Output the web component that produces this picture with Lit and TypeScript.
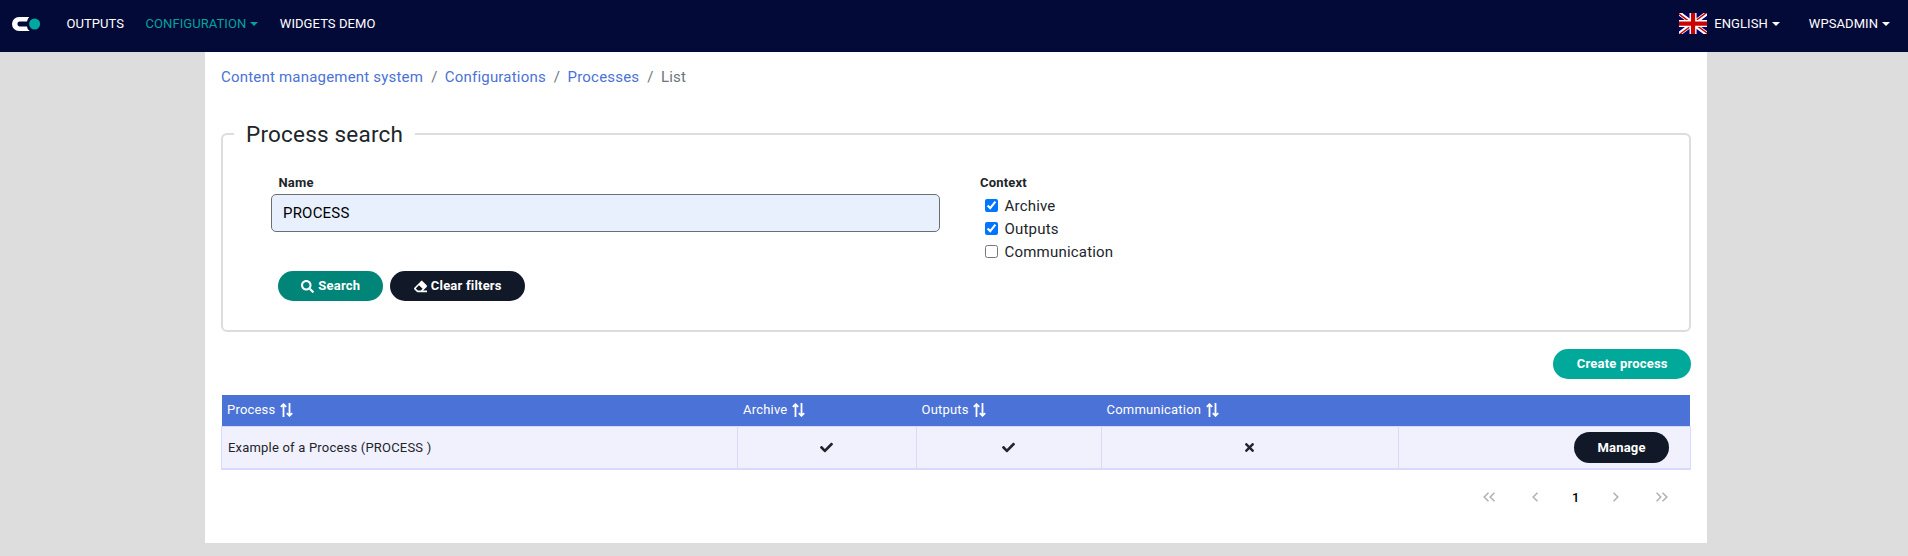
import { LitElement, html, css, svg } from "lit";
import { customElement } from "lit/decorators.js";

const crumbs = ["Content management system", "Configurations", "Processes"];
const contexts = [
  { label: "Archive", on: true },
  { label: "Outputs", on: true },
  { label: "Communication", on: false },
];
const columns = ["Process", "Archive", "Outputs", "Communication"];

const logo = svg`<svg class="logo" width="28" height="14" viewBox="0 0 28 14">
  <path fill="#fff" d="M7 0H17.2Q15 2.6 15 4.6H7.2A2.5 2.5 0 0 0 7.2 9.4H15Q15 11.6 17.6 14H7A7 7 0 0 1 7 0Z"/>
  <circle cx="22.6" cy="7" r="5.5" fill="#00a99d"/></svg>`;
const flag = svg`<svg class="flag" width="28" height="21" viewBox="0 0 640 480" preserveAspectRatio="none">
  <path fill="#006" d="M0 0h640v480H0z"/>
  <path fill="#fff" d="m75 0 244 181L562 0h78v62L400 241l240 178v61h-80L320 301 81 480H0v-60l239-178L0 64V0z"/>
  <path fill="#c00" d="m424 281 216 159v40L369 281zm-184 20 6 35L54 480H0zM640 0v3L391 191l2-44L590 0zM0 0l239 176h-60L0 42z"/>
  <path fill="#fff" d="M241 0v480h160V0zM0 160v160h640V160z"/>
  <path fill="#c00" d="M0 193v96h640v-96zM273 0v480h96V0z"/></svg>`;
const search = svg`<svg width="13" height="13" viewBox="0 0 512 512"><path fill="currentColor" d="M505 442.7 405.300 343c-4.500-4.500-10.600-7-17-7H372c27.600-35.300 44-79.700 44-128C416 93.100 322.900 0 208 0S0 93.100 0 208s93.100 208 208 208c48.300 0 92.700-16.400 128-44v16.300c0 6.400 2.500 12.500 7 17l99.700 99.700c9.400 9.400 24.600 9.400 33.900 0l28.300-28.300c9.400-9.400 9.400-24.600.1-34zM208 336c-70.700 0-128-57.200-128-128 0-70.700 57.200-128 128-128 70.700 0 128 57.200 128 128 0 70.700-57.200 128-128 128z"/></svg>`;
const eraser = svg`<svg width="13" height="13" viewBox="0 0 512 512"><path fill="currentColor" d="M497.900 273.900c18.700-18.700 18.700-49.100 0-67.900l-160-160c-18.700-18.700-49.100-18.700-67.900 0l-256 256c-18.700 18.700-18.700 49.100 0 67.900l96 96A48 48 0 0 0 144 480h356c6.600 0 12-5.400 12-12v-40c0-6.600-5.400-12-12-12H355.900l142-142.100zM195.300 204.700l144 144L272 416H150.600l-80-80 124.700-131.300z"/></svg>`;
const check = svg`<svg width="13" height="13" viewBox="0 0 512 512"><path fill="currentColor" d="M173.900 439.400l-166.400-166.400c-10-10-10-26.200 0-36.200l36.200-36.200c10-10 26.200-10 36.200 0L192 312.700 432.100 72.600c10-10 26.200-10 36.200 0l36.200 36.200c10 10 10 26.200 0 36.200L210.100 439.400c-10 10-26.200 10-36.200 0z"/></svg>`;
const cross = svg`<svg width="9" height="13" viewBox="0 0 352 512"><path fill="currentColor" d="M242.700 256l100.100-100.100c12.300-12.300 12.300-32.200 0-44.500l-22.200-22.200c-12.300-12.300-32.200-12.300-44.500 0L176 189.300 75.900 89.200c-12.300-12.300-32.200-12.300-44.500 0L9.200 111.500c-12.300 12.300-12.300 32.200 0 44.500L109.300 256 9.200 356.100c-12.300 12.300-12.300 32.200 0 44.500l22.200 22.200c12.300 12.300 32.200 12.300 44.500 0L176 322.700l100.100 100.100c12.300 12.300 32.200 12.300 44.500 0l22.200-22.200c12.300-12.300 12.300-32.200 0-44.500L242.700 256z"/></svg>`;
const sort = svg`<svg width="13" height="14" viewBox="0 0 13 14" fill="none" stroke="currentColor" stroke-width="1.800"><path d="M3.500 14V1.300M.8 3.800 3.500 1.200 6.200 3.800M9.500 0v12.700M6.800 10.200l2.700 2.600 2.700-2.600"/></svg>`;

const chevrons = (d: string, w: number) => svg`<svg width=${w} height="10" viewBox=${`0 0 ${w} 10`} fill="none" stroke="currentColor" stroke-width="1.600"><path d=${d}/></svg>`;

@customElement("app-root")
export class AppRoot extends LitElement {
  static styles = css`
    * { box-sizing: border-box; }
    :host { display: block; height: 556px; overflow: hidden; background: #ddd; color: #212529;
      font: 400 15px/23px Roboto, sans-serif; letter-spacing: .2px; }
    svg { display: block; flex: none; }
    nav { height: 52px; background: #030a38; color: #fff; display: flex; align-items: flex-start;
      padding: 0 18px 0 12px; font-size: 13px; font-weight: 400; line-height: 20px; letter-spacing: .07px; }
    .logo { margin: 17px 26.400px 0 0; }
    .left { display: flex; gap: 21.500px; padding-top: 14px; }
    .right { display: flex; gap: 29px; margin-left: auto; padding-top: 13px; }
    .item { display: flex; align-items: center; }
    .teal { color: #00a499; }
    .caret { border: 4px solid transparent; border-top-color: currentColor; border-bottom: 0; margin-left: 4px; }
    .flag { margin-right: 7px; }
    .lang { height: 21px; }
    main { width: 1502px; height: 491px; margin-left: 205px; background: #fff; padding: 14px 16px 0; }
    .crumbs { display: flex; color: #6c757d; height: 23px; }
    .crumbs a { color: #4b72d6; }
    .crumbs span { padding: 0 7.300px 0 8px; }
    fieldset { margin: 31px 0 0; padding: 0 0 0 48px; border: 2px solid #ddd; border-radius: 6px; height: 212px; min-width: 0; }
    legend { margin-left: -37px; padding: 0 12px; font-size: 22.500px; line-height: 28px; }
    .form { display: grid; grid-template-columns: 669px 1fr; column-gap: 40px; height: 123px; padding-top: 25px; }
    .title { font-size: 13px; font-weight: 700; line-height: 20px; margin-bottom: 2px; }
    .name .title { padding-left: 7.500px; margin-bottom: 1px; }
    .field { display: block; width: 100%; height: 38px; border: 1px solid #6b6e73; border-radius: 5px; background: #e8f0fe;
      color: #000; padding: 0 11px; font: inherit; letter-spacing: inherit; outline: 0; }
    .opt { display: flex; height: 23px; padding-left: 5px; }
    .opt input { width: 13px; height: 13px; margin: 4px 6.500px 0 0; }
    .buttons { display: flex; gap: 7px; padding-left: 7px; }
    .btn { display: inline-flex; align-items: center; gap: 4px; height: 30px; padding: 0 23.300px; border-radius: 16px;
      color: #fff; font-size: 13px; font-weight: 700; line-height: 20px; background: #111827; }
    .btn.search { background: #018578; }
    .btn.create { background: #00a99a; }
    .create-row { display: flex; justify-content: flex-end; margin: 17px 0 16px; }
    .grid { display: grid; grid-template-columns: 515px 178.500px 185px 297px 1fr; font-size: 13px; }
    .head { margin: 0 1px; background: #4b72d6; color: #fff; height: 31px; font-weight: 400; }
    .th { display: flex; align-items: center; gap: 4.500px; padding: 0 0 2px 6px; }
    .th:first-child { padding-left: 5px; }
    .row { height: 44px; background: #f1f1fe; border: 1px solid #d7dbf9; border-bottom-width: 2px; }
    .td { display: flex; align-items: center; justify-content: center; border-left: 1px solid #d7dbf9; }
    .td:first-child { justify-content: flex-start; padding-left: 6px; border-left: 0; }
    .td:last-child { justify-content: flex-end; padding-right: 21px; }
    .td .btn { height: 31px; }
    .pager { display: flex; align-items: center; height: 20px; margin-top: 17px; padding-left: 1262px; color: #b0b1ba; font-size: 13px; font-weight: 500; }
    .pager b { color: #000; font-weight: 500; margin: 0 33px 0 34px; width: 8px; }
    .gap { width: 37px; }
  `;

  render() {
    return html`
      <nav>
        ${logo}
        <div class="left">
          <div class="item">OUTPUTS</div>
          <div class="item teal">CONFIGURATION<i class="caret"></i></div>
          <div class="item">WIDGETS DEMO</div>
        </div>
        <div class="right">
          <div class="item lang">${flag}ENGLISH<i class="caret"></i></div>
          <div class="item">WPSADMIN<i class="caret"></i></div>
        </div>
      </nav>
      <main>
        <div class="crumbs">${crumbs.map((c) => html`<a>${c}</a><span>/</span>`)}List</div>
        <fieldset>
          <legend>Process search</legend>
          <div class="form">
            <div class="name">
              <div class="title">Name</div>
              <input class="field" value="PROCESS" />
            </div>
            <div>
              <div class="title">Context</div>
              ${contexts.map((c) => html`<label class="opt"><input type="checkbox" .checked=${c.on} />${c.label}</label>`)}
            </div>
          </div>
          <div class="buttons">
            <div class="btn search">${search}Search</div>
            <div class="btn">${eraser}Clear filters</div>
          </div>
        </fieldset>
        <div class="create-row"><div class="btn create">Create process</div></div>
        <div class="grid head">${columns.map((c) => html`<div class="th">${c}${sort}</div>`)}</div>
        <div class="grid row">
          <div class="td">Example of a Process (PROCESS )</div>
          <div class="td">${check}</div>
          <div class="td">${check}</div>
          <div class="td">${cross}</div>
          <div class="td"><div class="btn">Manage</div></div>
        </div>
        <div class="pager">
          ${chevrons("M5.500.7 1.200 5l4.300 4.300M11.500.7 7.200 5l4.300 4.300", 12)}<span class="gap"></span>
          ${chevrons("M5.500.7 1.200 5l4.300 4.300", 6)}<b>1</b>
          ${chevrons("M.5.7 4.800 5 .5 9.300", 6)}<span class="gap"></span>
          ${chevrons("M.5.7 4.800 5 .5 9.300M6.500.7 10.800 5 6.500 9.300", 12)}
        </div>
      </main>`;
  }
}
